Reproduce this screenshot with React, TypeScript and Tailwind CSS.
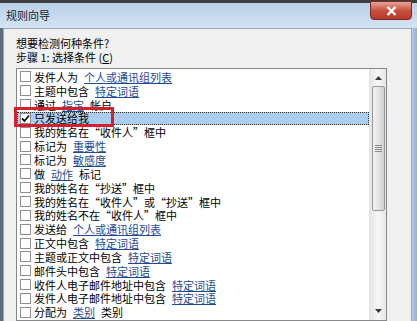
import React from 'react';

type Seg = [string, boolean?];

const rows: Seg[][] = [
  [['发件人为'], ['个人或通讯组列表', true]],
  [['主题中包含'], ['特定词语', true]],
  [['通过'], ['指定', true], ['帐户']],
  [['只发送给我']],
  [['我的姓名在“收件人”框中']],
  [['标记为'], ['重要性', true]],
  [['标记为'], ['敏感度', true]],
  [['做'], ['动作', true], ['标记']],
  [['我的姓名在“抄送”框中']],
  [['我的姓名在“收件人”或“抄送”框中']],
  [['我的姓名不在“收件人”框中']],
  [['发送给'], ['个人或通讯组列表', true]],
  [['正文中包含'], ['特定词语', true]],
  [['主题或正文中包含'], ['特定词语', true]],
  [['邮件头中包含'], ['特定词语', true]],
  [['收件人电子邮件地址中包含'], ['特定词语', true]],
  [['发件人电子邮件地址中包含'], ['特定词语', true]],
  [['分配为'], ['类别', true], ['类别']],
];

const CheckBox = ({ checked }: { checked?: boolean }) => (
  <span className="flex h-[11px] w-[11px] shrink-0 items-center justify-center border border-[#8f8f8f] bg-white">
    {checked && (
      <svg width="9" height="9" viewBox="0 0 9 9">
        <path d="M1 4.5 L3.5 7 L8 1.5" fill="none" stroke="#111" strokeWidth="1.8" />
      </svg>
    )}
  </span>
);

export default function App() {
  return (
    <div
      className="relative flex h-[321px] w-[417px] flex-col overflow-hidden bg-[#3d3d3d] text-[11px] text-black"
      style={{ fontFamily: '"Noto Sans CJK SC", "Liberation Sans", sans-serif' }}
    >
      <div className="mt-[3px] flex h-[25px] shrink-0 items-center bg-gradient-to-b from-[#b9d0e8] to-[#d3e3f3] pl-[6px] text-[11px] leading-[13px] text-[#1a1a1a]">
        规则向导
      </div>

      {/* close button */}
      <div className="absolute left-[370px] top-[1px] flex h-[19px] w-[42px] items-center justify-center rounded-b-[4px] border border-[#7a2a22] bg-gradient-to-b from-[#e8a497] via-[#c9503f] to-[#b8382a]">
        <svg width="11" height="10" viewBox="0 0 11 10">
          <path d="M1.5 1 L9.5 9 M9.5 1 L1.5 9" stroke="#fff" strokeWidth="2.4" />
        </svg>
      </div>

      <div className="flex min-h-0 flex-1 bg-gradient-to-b from-[#d3e3f3] to-[#c7dbef]">
        <div className="w-[3px] shrink-0 bg-[#5f6e7c]" />
        <div className="flex min-w-0 flex-1 flex-col border-l border-t border-r border-[#9aa6b3] bg-[#f0f0f0] pl-[12px] pt-[7px]">
          <div className="leading-[14px]">想要检测何种条件?</div>
          <div className="leading-[14px]">步骤 1: 选择条件 (<span className="underline">C</span>)</div>

          <div className="relative mt-[4px] flex min-h-0 w-[371px] flex-1 border border-[#828790] bg-white">
            <div className="flex min-w-0 flex-1 flex-col pt-[1px]">
              {rows.map((segs, i) => {
                const sel = i === 3;
                return (
                  <div
                    key={i}
                    className={
                      sel
                        ? 'flex h-[13.85px] shrink-0 items-center gap-[3px] border border-dotted border-[#333] bg-[#abcdef] pl-[2px]'
                        : 'flex h-[13.85px] shrink-0 items-center gap-[3px] pl-[3px]'
                    }
                  >
                    <CheckBox checked={sel} />
                    <span className="flex items-center gap-[6px] whitespace-nowrap leading-[12px]">
                      {segs.map(([t, link], j) => (
                        <span key={j} className={link ? 'text-[#1d4b92] underline' : ''}>
                          {t}
                        </span>
                      ))}
                    </span>
                  </div>
                );
              })}
            </div>

            {/* scrollbar */}
            <div className="flex w-[17px] shrink-0 flex-col items-center border-l border-[#e3e3e3] bg-gradient-to-r from-[#e6e6e6] via-[#f7f7f7] to-[#e6e6e6]">
              <div className="flex h-[17px] w-full shrink-0 items-center justify-center">
                <svg width="7" height="4" viewBox="0 0 7 4">
                  <path d="M0 4 L3.5 0 L7 4 Z" fill="#3a3a3a" />
                </svg>
              </div>
              <div className="flex h-[125px] w-[13px] shrink-0 items-center justify-center rounded-[2px] border border-[#979797] bg-gradient-to-r from-[#f2f2f2] via-[#e4e4e4] to-[#cfcfcf]">
                <div className="flex flex-col gap-[1px]">
                  <div className="h-px w-[7px] bg-[#8a8a8a]" />
                  <div className="h-px w-[7px] bg-[#8a8a8a]" />
                  <div className="h-px w-[7px] bg-[#8a8a8a]" />
                  <div className="h-px w-[7px] bg-[#8a8a8a]" />
                </div>
              </div>
              <div className="flex-1" />
              <div className="mb-[4px] flex h-[10px] items-center justify-center">
                <svg width="7" height="4" viewBox="0 0 7 4">
                  <path d="M0 0 L3.5 4 L7 0 Z" fill="#3a3a3a" />
                </svg>
              </div>
            </div>

            {/* red annotation */}
            <div className="pointer-events-none absolute left-[-3px] top-[38px] h-[20px] w-[100px] border-[3px] border-[#d4202c]" />
          </div>
        </div>
        <div className="w-[5px] shrink-0 bg-gradient-to-r from-[#b5cce4] to-[#8fb0d4]" />
      </div>
    </div>
  );
}
